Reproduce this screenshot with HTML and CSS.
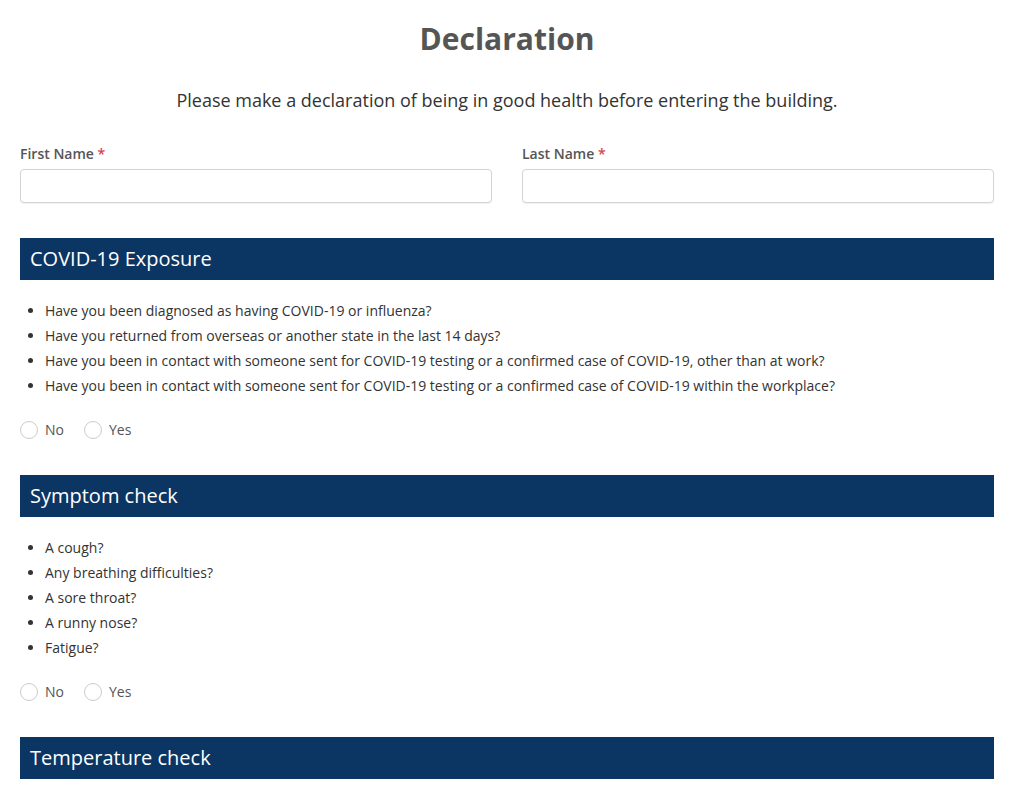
FILE: index.html
```html
<!DOCTYPE html>
<html lang="en">
<head>
    <meta charset="UTF-8">
    <meta name="viewport" content="width=device-width, initial-scale=1.0">
    <title>Declaration</title>
    <link rel="stylesheet" href="styles.css">
</head>
<body>
    <div class="page">
        <h1 class="title">Declaration</h1>
        <p class="intro">Please make a declaration of being in good health before entering the building.</p>

        <div class="name-row">
            <div class="field">
                <label for="first">First Name <span class="req">*</span></label>
                <input type="text" id="first" name="first">
            </div>
            <div class="field">
                <label for="last">Last Name <span class="req">*</span></label>
                <input type="text" id="last" name="last">
            </div>
        </div>

        <div class="section">
            <h2 class="section-head">COVID-19 Exposure</h2>
            <ul class="questions">
                <li>Have you been diagnosed as having COVID-19 or influenza?</li>
                <li>Have you returned from overseas or another state in the last 14 days?</li>
                <li>Have you been in contact with someone sent for COVID-19 testing or a confirmed case of COVID-19, other than at work?</li>
                <li>Have you been in contact with someone sent for COVID-19 testing or a confirmed case of COVID-19 within the workplace?</li>
            </ul>
            <div class="choices">
                <label class="choice"><span class="radio"></span>No</label>
                <label class="choice"><span class="radio"></span>Yes</label>
            </div>
        </div>

        <div class="section">
            <h2 class="section-head">Symptom check</h2>
            <ul class="questions">
                <li>A cough?</li>
                <li>Any breathing difficulties?</li>
                <li>A sore throat?</li>
                <li>A runny nose?</li>
                <li>Fatigue?</li>
            </ul>
            <div class="choices">
                <label class="choice"><span class="radio"></span>No</label>
                <label class="choice"><span class="radio"></span>Yes</label>
            </div>
        </div>

        <div class="section">
            <h2 class="section-head">Temperature check</h2>
        </div>
    </div>
</body>
</html>
```

FILE: styles.css
```css
body {
    margin: 0;
    background-color: #fff;
    color: #333;
    font-family: "Open Sans", Arial, sans-serif;
}

.page {
    padding: 16px 17px 0 20px;
}

.title {
    margin: 0;
    text-align: center;
    font-size: 30px;
    font-weight: 700;
    color: #555;
    line-height: 46px;
}

.intro {
    margin: 25px 0 0;
    text-align: center;
    font-size: 18px;
    line-height: 26px;
    color: #333;
}

.name-row {
    display: flex;
    gap: 30px;
    margin-top: 31px;
}

.field {
    flex: 1;
    display: flex;
    flex-direction: column;
}

.field label {
    font-size: 14px;
    font-weight: 600;
    color: #555;
    line-height: 20px;
    margin-bottom: 5px;
}

.req {
    color: #d9434b;
}

.field input {
    height: 34px;
    box-sizing: border-box;
    border: 1px solid #d4d4d4;
    border-radius: 4px;
    box-shadow: 0 1px 1px rgba(0, 0, 0, 0.06);
}

.section {
    margin-top: 35px;
}

.section-head {
    margin: 0;
    height: 42px;
    padding-left: 10px;
    background-color: #0b3562;
    color: #fff;
    font-size: 20px;
    font-weight: 400;
    line-height: 42px;
}

.questions {
    margin: 18px 0 0;
    padding-left: 25px;
    font-size: 14px;
    line-height: 25px;
    color: #333;
}

.choices {
    display: flex;
    gap: 20px;
    margin-top: 22px;
}

.choice {
    display: flex;
    align-items: center;
    gap: 7px;
    font-size: 14px;
    color: #555;
    line-height: 20px;
}

.radio {
    width: 16px;
    height: 16px;
    border: 1px solid #ccc;
    border-radius: 50%;
    background-color: #fff;
}
```
